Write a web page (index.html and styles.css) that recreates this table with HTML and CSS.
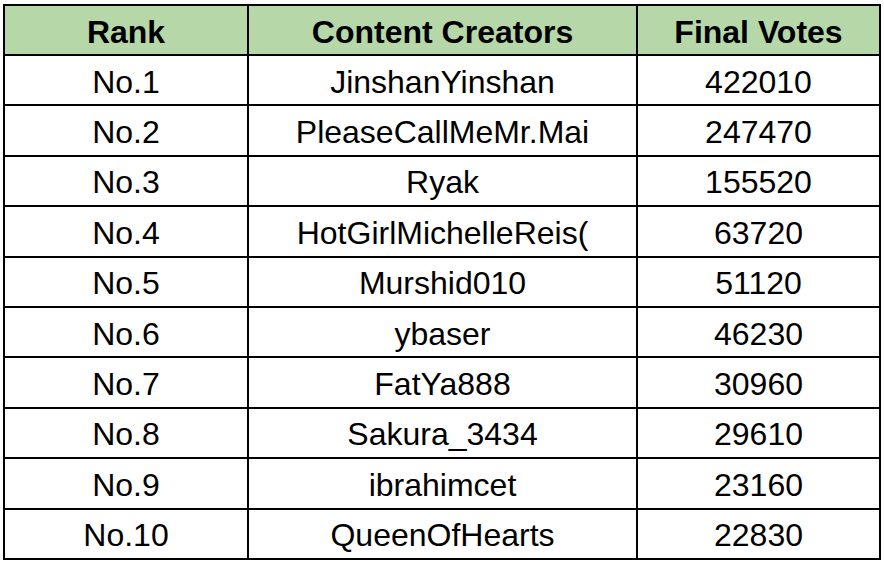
FILE: index.html
```html
<!DOCTYPE html>
<html>
<head>
<meta charset="utf-8">
<link rel="stylesheet" href="styles.css">
</head>
<body>
<table class="ranking">
  <colgroup>
    <col class="c-rank">
    <col class="c-name">
    <col class="c-votes">
  </colgroup>
  <thead>
    <tr><th>Rank</th><th>Content Creators</th><th>Final Votes</th></tr>
  </thead>
  <tbody>
    <tr><td>No.1</td><td>JinshanYinshan</td><td>422010</td></tr>
    <tr><td>No.2</td><td>PleaseCallMeMr.Mai</td><td>247470</td></tr>
    <tr><td>No.3</td><td>Ryak</td><td>155520</td></tr>
    <tr><td>No.4</td><td>HotGirlMichelleReis(</td><td>63720</td></tr>
    <tr><td>No.5</td><td>Murshid010</td><td>51120</td></tr>
    <tr><td>No.6</td><td>ybaser</td><td>46230</td></tr>
    <tr><td>No.7</td><td>FatYa888</td><td>30960</td></tr>
    <tr><td>No.8</td><td>Sakura_3434</td><td>29610</td></tr>
    <tr><td>No.9</td><td>ibrahimcet</td><td>23160</td></tr>
    <tr><td>No.10</td><td>QueenOfHearts</td><td>22830</td></tr>
  </tbody>
</table>
</body>
</html>
```
FILE: styles.css
```css
html, body {
  margin: 0;
  padding: 0;
  background: #ffffff;
}
body {
  padding: 4px 0 0 3px;
  font-family: "Liberation Sans", Arial, sans-serif;
  color: #000000;
}
.ranking {
  border-collapse: collapse;
  width: 876px;
  height: 556px;
  table-layout: fixed;
}
.c-rank { width: 244px; }
.c-name { width: 389px; }
.c-votes { width: 243px; }
.ranking tr {
  height: 50px;
}
.ranking th,
.ranking td {
  border: 2px solid #000000;
  text-align: center;
  vertical-align: middle;
  padding: 3px 0 0 0;
  font-size: 32px;
  line-height: 36px;
  white-space: nowrap;
  overflow: hidden;
}
.ranking th {
  background: #b6d7a8;
  font-weight: bold;
}
.ranking td {
  font-weight: normal;
}
```
